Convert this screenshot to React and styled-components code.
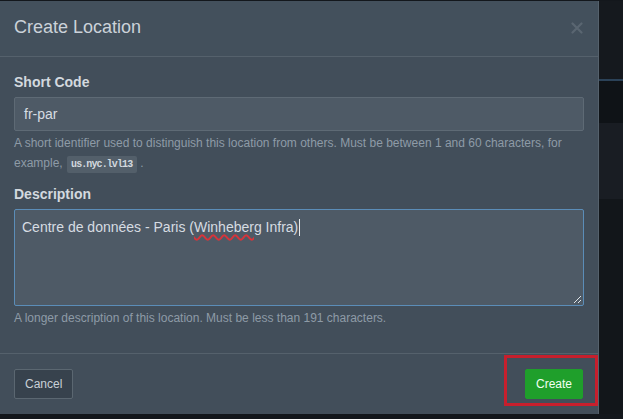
import React from "react";
import styled, { createGlobalStyle } from "styled-components";

const GlobalStyle = createGlobalStyle`
  html, body {
    margin: 0;
    padding: 0;
    background: #13171c;
    font-family: "Liberation Sans", Arial, sans-serif;
  }
`;

const Page = styled.div`
  width: 623px;
  height: 419px;
  overflow: hidden;
  background: #13171c;
  display: flex;
  flex-direction: column;
`;

const Stage = styled.div`
  display: flex;
  padding-top: 1px;
`;

const Modal = styled.div`
  width: 598px;
  height: 413px;
  background: #424e5a;
  border-right: 1px solid #55616c;
  display: flex;
  flex-direction: column;
`;

const Header = styled.div`
  height: 56px;
  display: flex;
  align-items: center;
  justify-content: space-between;
  padding: 0 14px 0 14px;
  border-bottom: 1px solid #55616c;
  background: #43505c;
`;

const Title = styled.h3`
  margin: 0 0 2px;
  font-size: 18px;
  font-weight: 400;
  color: #cbd2d9;
`;

const Close = styled.span`
  display: flex;
  margin-right: 1px;
  margin-bottom: 2px;
`;

const Body = styled.div`
  padding: 15px 14px 25px;
  display: flex;
  flex-direction: column;
`;

const Label = styled.label`
  font-size: 14px;
  font-weight: 700;
  line-height: 20px;
  color: #d3d9df;
  margin: ${(p) => (p.$first ? "0" : "11px")} 0 5px;
`;

const Input = styled.div`
  box-sizing: border-box;
  height: 34px;
  display: flex;
  align-items: center;
  padding: 0 9px;
  background: #4e5a66;
  border: 1px solid #5e6a75;
  border-radius: 2px;
  font-size: 14px;
  color: #d6dce2;
`;

const TextArea = styled.div`
  position: relative;
  box-sizing: border-box;
  height: 97px;
  padding: 7px 7px;
  background: #4e5a66;
  border: 1px solid #5b8db8;
  border-radius: 2px;
  font-size: 14px;
  line-height: 20px;
  color: #d6dce2;
`;

const Misspelled = styled.span`
  text-decoration: underline wavy #d8333a;
  text-decoration-thickness: 1.5px;
  text-underline-offset: 2px;
`;

const Caret = styled.span`
  display: inline-block;
  width: 1px;
  height: 17px;
  margin-left: 1px;
  vertical-align: -4px;
  background: #e6eaee;
`;

const Grip = styled.svg`
  position: absolute;
  right: 1px;
  bottom: 1px;
`;

const Help = styled.p`
  margin: 2px 0 0;
  font-size: 12px;
  line-height: 20px;
  color: #8e9ba7;
`;

const Code = styled.code`
  display: inline-block;
  padding: 0 5px 0 4px;
  margin: 0 3px 0 1px;
  line-height: 17px;
  background: #535f6a;
  border-radius: 2px;
  font-family: "Liberation Mono", "DejaVu Sans Mono", monospace;
  font-size: 10px;
  font-weight: 700;
  letter-spacing: -0.9px;
  color: #d2d8de;
`;

const Footer = styled.div`
  position: relative;
  margin-top: auto;
  border-top: 1px solid #55616c;
  padding: 15px 15px 15px 14px;
  display: flex;
  justify-content: space-between;
  align-items: center;
`;

const Button = styled.button`
  box-sizing: border-box;
  height: 30px;
  padding: 0 10px;
  border-radius: 2px;
  font-family: "Liberation Sans", Arial, sans-serif;
  font-size: 12px;
  color: ${(p) => (p.$primary ? "#f2fff2" : "#c9d0d7")};
  background: ${(p) => (p.$primary ? "#1f9f2b" : "#37424d")};
  border: 1px solid ${(p) => (p.$primary ? "#1f9f2b" : "#5b6771")};
`;

const Highlight = styled.div`
  position: absolute;
  top: 1px;
  right: 0;
  width: 94px;
  height: 51px;
  box-sizing: border-box;
  border: 3px solid #c71f2d;
  pointer-events: none;
`;

const Side = styled.div`
  flex: 1;
  display: flex;
  flex-direction: column;
`;

const Band = styled.div`
  height: ${(p) => p.$h}px;
  background: ${(p) => p.$c};
`;

export default function App() {
  return (
    <Page>
      <GlobalStyle />
      <Stage>
        <Modal>
          <Header>
            <Title>Create Location</Title>
            <Close>
              <svg width="12" height="12" viewBox="0 0 12 12">
                <path d="M1.5 1.5 L10.5 10.5 M10.5 1.5 L1.5 10.5" stroke="#5a6671" strokeWidth="2.2" strokeLinecap="round" />
              </svg>
            </Close>
          </Header>
          <Body>
            <Label $first>Short Code</Label>
            <Input>fr-par</Input>
            <Help>
              A short identifier used to distinguish this location from others. Must be between 1 and 60 characters, for
              example, <Code>us.nyc.lvl13</Code>.
            </Help>
            <Label>Description</Label>
            <TextArea>
              Centre de données - Paris (<Misspelled>Winheberg</Misspelled> Infra)
              <Caret />
              <Grip width="9" height="9" viewBox="0 0 9 9">
                <path d="M8 1 L1 8 M8 5 L5 8" stroke="#dfe4e8" strokeWidth="1" />
              </Grip>
            </TextArea>
            <Help>A longer description of this location. Must be less than 191 characters.</Help>
          </Body>
          <Footer>
            <Button>Cancel</Button>
            <Button $primary>Create</Button>
            <Highlight />
          </Footer>
        </Modal>
        <Side>
          <Band $h={78} $c="#15191e" />
          <Band $h={2} $c="#2b4258" />
          <Band $h={42} $c="#0f1317" />
          <Band $h={76} $c="#191d23" />
          <Band $h={215} $c="#12161a" />
        </Side>
      </Stage>
    </Page>
  );
}
